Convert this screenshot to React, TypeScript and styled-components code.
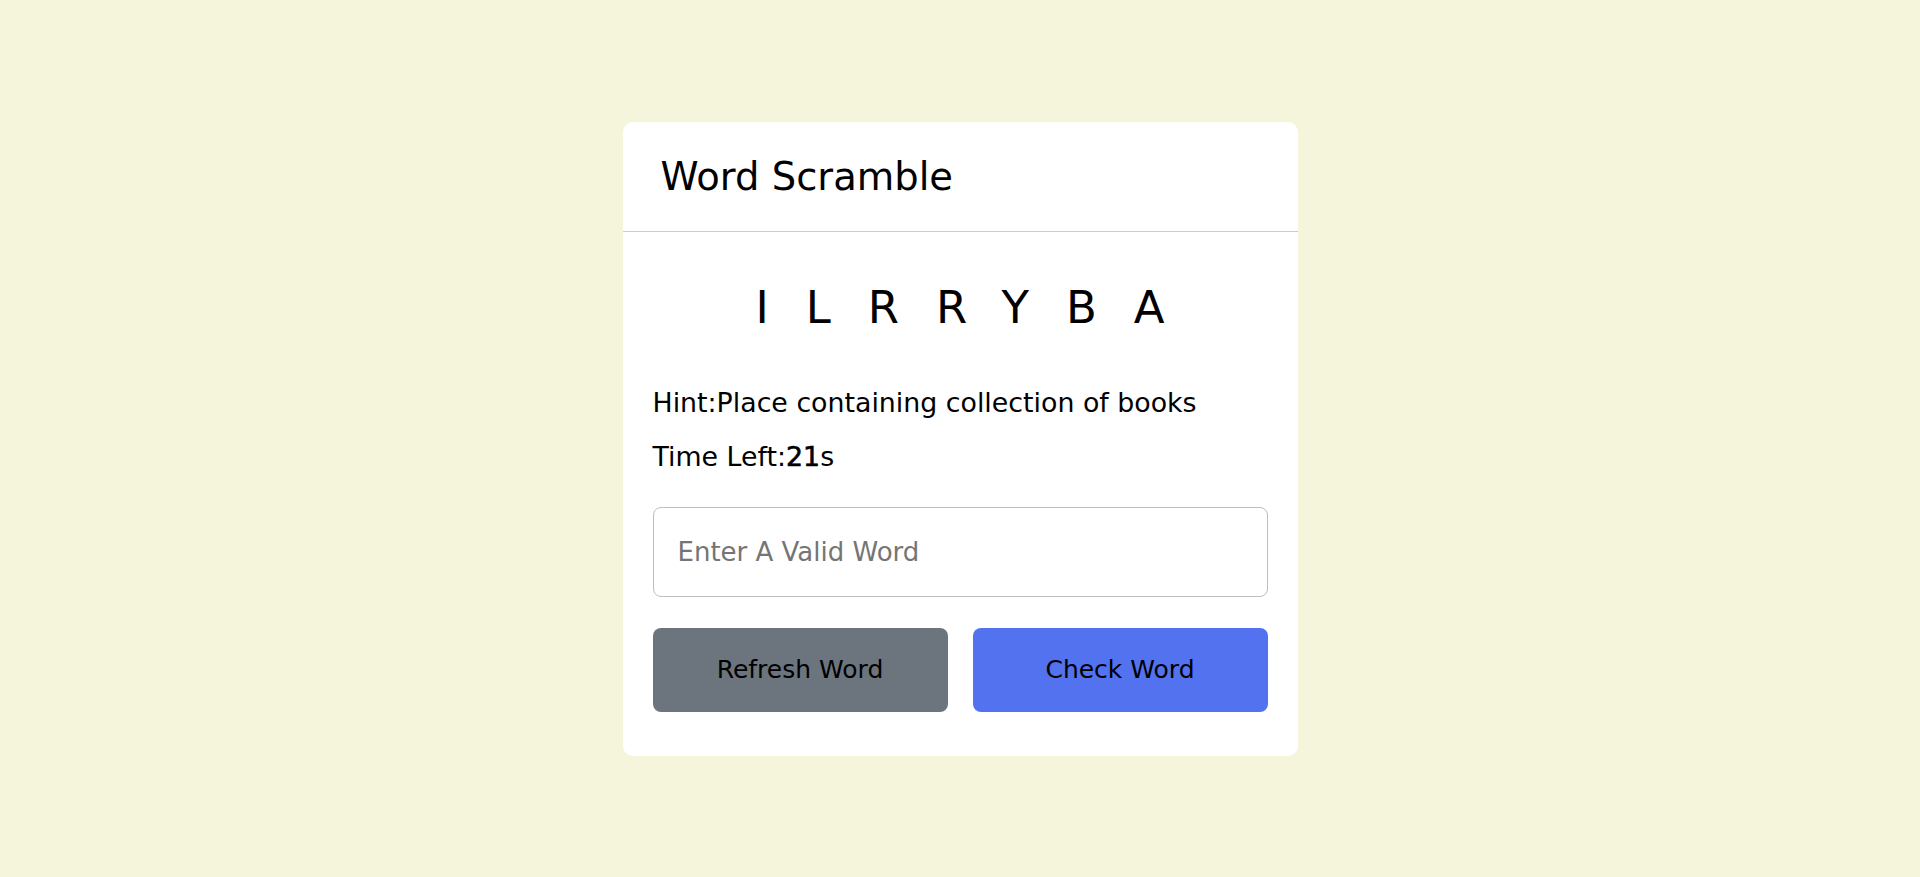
import React from "react";
import styled, { createGlobalStyle } from "styled-components";

const GlobalStyle = createGlobalStyle`
  * { box-sizing: border-box; }
  html, body { margin: 0; padding: 0; }
  body {
    background: #f5f5dc;
    font-family: "DejaVu Sans", "Liberation Sans", sans-serif;
    color: #000;
  }
`;

const Page = styled.div`
  min-height: 100vh;
  display: flex;
  align-items: center;
  justify-content: center;
`;

const Card = styled.div`
  width: 675px;
  background: #fff;
  border-radius: 10px;
`;

const Title = styled.h2`
  margin: 0;
  padding: 0 38px;
  height: 110px;
  line-height: 109px;
  font-size: 38.5px;
  font-weight: 400;
  border-bottom: 1px solid #ccc;
`;

const Content = styled.div`
  padding: 46px 30px 44px;
`;

const Word = styled.p`
  margin: 0 -37px 0 0;
  text-align: center;
  font-size: 45px;
  line-height: 60px;
  letter-spacing: 37px;
  text-transform: uppercase;
`;

const Details = styled.div`
  margin: 45px 0 30px;
  display: flex;
  flex-direction: column;
  gap: 14px;
`;

const Line = styled.p`
  margin: 0;
  font-size: 26.8px;
  line-height: 40px;
`;

const Strong = styled.b`
  font-weight: 400;
  -webkit-text-stroke: 0.6px #000;
`;

const Input = styled.input`
  display: block;
  width: 100%;
  height: 90px;
  padding: 0 24px;
  font-family: inherit;
  font-size: 26px;
  border: 1px solid #bfbfbf;
  border-radius: 8px;
  outline: none;
  &::placeholder { color: #757575; }
`;

const Buttons = styled.div`
  margin-top: 31px;
  display: grid;
  grid-template-columns: 1fr 1fr;
  gap: 25px;
`;

const Button = styled.button<{ $variant: "refresh" | "check" }>`
  height: 84px;
  border: none;
  border-radius: 8px;
  font-family: inherit;
  font-size: 25px;
  color: #000;
  cursor: pointer;
  background: ${(p) => (p.$variant === "refresh" ? "#6c757d" : "#5372f0")};
`;

export default function App() {
  return (
    <>
      <GlobalStyle />
      <Page>
        <Card>
          <Title>Word Scramble</Title>
          <Content>
            <Word>ilrryba</Word>
            <Details>
              <Line>Hint:Place containing collection of books</Line>
              <Line>
                Time Left:<Strong>21</Strong>s
              </Line>
            </Details>
            <Input placeholder="Enter A Valid Word" />
            <Buttons>
              <Button $variant="refresh">Refresh Word</Button>
              <Button $variant="check">Check Word</Button>
            </Buttons>
          </Content>
        </Card>
      </Page>
    </>
  );
}
